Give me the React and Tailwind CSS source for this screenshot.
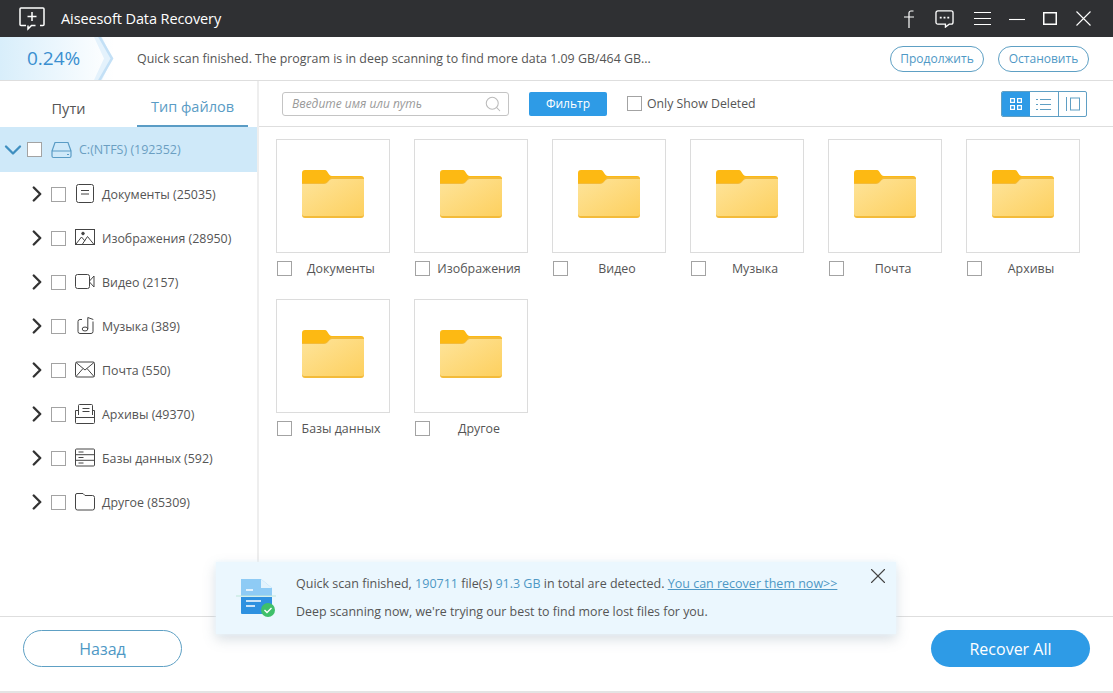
import React from "react";
import { ChevronRight, ChevronDown, Search, X } from "lucide-react";

const font = "font-['Open_Sans','Noto_Sans',sans-serif]";

const Check = ({ className = "" }) => (
  <span className={`block w-[15px] h-[15px] border border-[#a3a3a3] bg-white shrink-0 ${className}`} />
);

const icons = {
  doc: (
    <>
      <rect x="1.5" y="0.5" width="17" height="18" rx="2" />
      <path d="M6 6.500h8M6 10h8" />
    </>
  ),
  image: (
    <>
      <rect x="0.5" y="1.500" width="19" height="15" />
      <circle cx="8" cy="5.500" r="1.300" fill="#444" />
      <path d="M1 16l5.500-7 3.500 4M7.500 16l5-7.500 6.500 8" />
    </>
  ),
  video: (
    <>
      <rect x="0.5" y="2.500" width="14" height="14" rx="2" />
      <path d="M14.500 9l4.500-5v11l-4.500-5" />
    </>
  ),
  music: (
    <>
      <path d="M7 3.500H5a2 2 0 0 0-2 2v10a2 2 0 0 0 2 2h11a2 2 0 0 0 2-2v-10" />
      <ellipse cx="10" cy="13" rx="2.800" ry="2" />
      <path d="M12.800 13V1.500l5.500 2" />
    </>
  ),
  mail: (
    <>
      <rect x="0.5" y="2" width="19" height="15" rx="1.500" />
      <path d="M1 2.500l9 7.500 9-7.500M1 16.500l7-8M19 16.500l-7-8" />
    </>
  ),
  archive: (
    <>
      <path d="M3.500 11V1.500a1 1 0 0 1 1-1h12a1 1 0 0 1 1 1V11" />
      <path d="M7.500 4.500h7M7.500 7.500h7" />
      <path d="M3.500 6.500H.5v12a1 1 0 0 0 1 1h17a1 1 0 0 0 1-1v-12h-2M.5 13.500h19" />
    </>
  ),
  db: (
    <>
      <rect x="0.5" y="1" width="19" height="17" rx="1" />
      <path d="M.5 6.700h19M.5 12.300h19M3.500 4h5M3.500 9.500h5M3.500 15h5" />
    </>
  ),
  other: <path d="M.5 16V3a1.500 1.500 0 0 1 1.500-1.500h6l2 2h7.500A2 2 0 0 1 19.500 5.500V16a2 2 0 0 1-2 2h-15a2 2 0 0 1-2-2z" />,
};

const tree = [
  ["doc", "Документы (25035)"],
  ["image", "Изображения (28950)"],
  ["video", "Видео (2157)"],
  ["music", "Музыка (389)"],
  ["mail", "Почта (550)"],
  ["archive", "Архивы (49370)"],
  ["db", "Базы данных (592)"],
  ["other", "Другое (85309)"],
];

const folders = ["Документы", "Изображения", "Видео", "Музыка", "Почта", "Архивы", "Базы данных", "Другое"];

const Folder = () => (
  <svg width="62" height="48" viewBox="0 0 62 48">
    <defs>
      <linearGradient id="folderBody" x1="0" y1="0" x2="1" y2="1">
        <stop offset="0" stopColor="#fee49a" />
        <stop offset="1" stopColor="#fdd05f" />
      </linearGradient>
    </defs>
    <path d="M0 3a3 3 0 0 1 3-3h20c3 0 3 6 7 6h29a3 3 0 0 1 3 3v10H0z" fill="#fdb913" />
    <path d="M0 13h22c4 0 5-5 8-6h29a3 3 0 0 1 3 3v35a3 3 0 0 1-3 3H3a3 3 0 0 1-3-3z" fill="#f3bb3a" />
    <path d="M0 14h22c4 0 5-5 8-5h32v35a2 2 0 0 1-2 2H2a2 2 0 0 1-2-2z" fill="url(#folderBody)" />
  </svg>
);

const FolderCard = ({ name }) => (
  <div className="w-[114px]">
    <div className="h-[114px] border border-[#dcdcdc] bg-white flex items-center justify-center pb-[5px]">
      <Folder />
    </div>
    <div className="flex items-center h-[15px] mt-[8px]">
      <Check className="ml-[1px]" />
      <span className="flex-1 text-center text-[12.400px] text-[#555] pt-[2px] whitespace-nowrap">{name}</span>
    </div>
  </div>
);

export default function App() {
  return (
    <div className={`${font} w-[1113px] h-[693px] bg-white flex flex-col overflow-hidden relative`}>
      {/* title bar */}
      <div className="h-[37px] shrink-0 bg-[#2f3033] flex items-center text-white">
        <svg className="ml-[19px]" width="26" height="24" viewBox="0 0 26 24" fill="none" stroke="#fff" strokeWidth="1.500">
          <path d="M7 18.500H2a1 1 0 0 1-1-1V2a1 1 0 0 1 1-1h22a1 1 0 0 1 1 1v15.500a1 1 0 0 1-1 1h-3M9 18.500l0 3.500 3.500-3.500h4" />
          <path d="M13 5v9M8.500 9.500h9" />
        </svg>
        <span className="ml-[16px] text-[14.500px] tracking-[-0.1px]">Aiseesoft Data Recovery</span>
        <div className="ml-auto flex items-center">
          <svg width="12" height="18" viewBox="0 0 12 18" fill="none" stroke="#fff" strokeWidth="1.200">
            <path d="M10.500 1H8a2 2 0 0 0-2 2v15M1 7h10" />
          </svg>
          <svg className="ml-[20px]" width="19" height="18" viewBox="0 0 20 19" fill="none" stroke="#fff" strokeWidth="1.400">
            <path d="M3 1h14a2 2 0 0 1 2 2v10a2 2 0 0 1-2 2h-2l-4 3v-3H3a2 2 0 0 1-2-2V3a2 2 0 0 1 2-2z" />
            <path d="M5 8h2M9 8h2M13 8h2" strokeWidth="1.800" />
          </svg>
          <svg className="ml-[20px]" width="17" height="15" viewBox="0 0 17 15" fill="none" stroke="#fff" strokeWidth="1.100">
            <path d="M0 1.500h17M0 7.500h17M0 13.500h17" />
          </svg>
          <svg className="ml-[18px]" width="16" height="4" viewBox="0 0 16 4" fill="none" stroke="#fff" strokeWidth="1.100">
            <path d="M0 2.500h16" />
          </svg>
          <svg className="ml-[18px]" width="14" height="13" viewBox="0 0 14 13" fill="none" stroke="#fff" strokeWidth="1.500">
            <rect x="0.750" y="0.750" width="12.500" height="11.500" />
          </svg>
          <svg className="ml-[19px] mr-[22px]" width="15" height="15" viewBox="0 0 15 15" fill="none" stroke="#fff" strokeWidth="1.100">
            <path d="M.500 .500l14 14M14.500 .500l-14 14" />
          </svg>
        </div>
      </div>

      {/* progress row */}
      <div className="h-[44px] shrink-0 border-b border-[#dedede] flex items-center relative">
        <div className="w-[114px] h-full shrink-0 bg-gradient-to-r from-[#d8eefb] to-white flex items-center relative overflow-hidden">
          <span className="ml-[27px] text-[19px] text-[#3a8fd0]">0.24%</span>
          <svg className="absolute right-0 top-0" width="20" height="43" viewBox="0 0 20 43">
            <path d="M0 0h8l10 21.500L8 43H0l10-21.500z" fill="#e4f2fc" />
            <path d="M5 -1l13 22.500L5 44" fill="none" stroke="#c3e0f6" strokeWidth="2.500" />
          </svg>
        </div>
        <span className="ml-[23px] text-[12.400px] text-[#555] pt-[2px] whitespace-nowrap">
          Quick scan finished. The program is in deep scanning to find more data 1.09 GB/464 GB...
        </span>
        <div className="ml-auto flex gap-[14px] mr-[24px]">
          <button className="w-[94px] h-[26px] rounded-full border border-[#5ea0c4] text-[12px] text-[#4e98c5]">Продолжить</button>
          <button className="w-[91px] h-[26px] rounded-full border border-[#5ea0c4] text-[12px] text-[#4e98c5]">Остановить</button>
        </div>
      </div>

      {/* middle */}
      <div className="flex-1 flex min-h-0">
        <div className="w-[259px] shrink-0 border-r-2 border-[#eeeeee]">
          <div className="h-[46px] flex">
            <div className="w-[137px] flex items-center justify-center pt-[9px] text-[14.500px] text-[#555]">Пути</div>
            <div className="w-[111px] flex items-center justify-center pt-[7px] text-[14.500px] text-[#5a9cc5] border-b-2 border-[#5a9cc5] whitespace-nowrap">
              Тип файлов
            </div>
          </div>
          <div className="h-[45px] bg-[#cfe9f9] flex items-center">
            <ChevronDown className="-ml-px shrink-0 text-[#3f8fc0]" size={28} strokeWidth={2} />
            <Check className="bg-transparent" />
            <svg className="ml-[9px]" width="21" height="18" viewBox="0 0 21 18" fill="none" stroke="#5a9cc5" strokeWidth="1.200">
              <path d="M1 10L4 1.500h13L20 10M1 10h19v5a1.500 1.500 0 0 1-1.500 1.500h-16A1.500 1.500 0 0 1 1 15zM16 13.500h2" />
            </svg>
            <span className="ml-[7px] pt-[2px] text-[12.500px] text-[#6b9fc2] whitespace-nowrap">C:(NTFS) (192352)</span>
          </div>
          {tree.map(([icon, label]) => (
            <div key={label} className="h-[44px] flex items-center">
              <ChevronRight className="ml-[24px] -mt-[1px] shrink-0 text-[#333]" size={26} strokeWidth={2.200} />
              <Check className="ml-[1px]" />
              <svg className="ml-[9px] shrink-0" width="20" height="20" viewBox="0 0 20 20" fill="none" stroke="#444" strokeWidth="1">
                {icons[icon]}
              </svg>
              <span className="ml-[7px] pt-[2px] text-[12.400px] text-[#555] whitespace-nowrap">{label}</span>
            </div>
          ))}
        </div>

        <div className="flex-1 min-w-0">
          <div className="h-[46px] border-b border-[#dedede] flex items-center">
            <div className="ml-[23px] w-[227px] h-[24px] border border-[#c4c4c4] rounded-[3px] flex items-center">
              <span className="ml-[9px] pt-[1px] text-[12px] italic text-[#9a9a9a] whitespace-nowrap">Введите имя или путь</span>
              <Search className="ml-auto mr-[6px] text-[#bbb]" size={18} strokeWidth={1.400} />
            </div>
            <button className="ml-[20px] w-[78px] h-[24px] rounded-[2px] bg-[#2e9be6] text-white text-[12px]">Фильтр</button>
            <Check className="ml-[20px]" />
            <span className="ml-[5px] pt-[2px] text-[12.300px] text-[#555] whitespace-nowrap">Only Show Deleted</span>
            <div className="ml-auto mr-[26px] flex h-[26px] border border-[#5f9fc4] rounded-[2px] overflow-hidden">
              <div className="w-[28px] bg-[#2e9be6] flex items-center justify-center">
                <svg width="12" height="12" viewBox="0 0 12 12" fill="none" stroke="#fff" strokeWidth="1.200">
                  <rect x="0.600" y="0.600" width="3.800" height="3.800" />
                  <rect x="7.600" y="0.600" width="3.800" height="3.800" />
                  <rect x="0.600" y="7.600" width="3.800" height="3.800" />
                  <rect x="7.600" y="7.600" width="3.800" height="3.800" />
                </svg>
              </div>
              <div className="w-[29px] border-r border-[#5f9fc4] flex items-center justify-center">
                <svg width="16" height="12" viewBox="0 0 16 12" fill="none" stroke="#5f9fc4" strokeWidth="1">
                  <path d="M4 1.500h11M4 6.500h11M4 11.500h11M0 1.500h2M0 6.500h2M0 11.500h2" />
                </svg>
              </div>
              <div className="w-[27px] flex items-center justify-center">
                <svg width="14" height="14" viewBox="0 0 14 14" fill="none" stroke="#5f9fc4" strokeWidth="1">
                  <path d="M.500 0v14" />
                  <rect x="4.500" y="1" width="9" height="12" />
                </svg>
              </div>
            </div>
          </div>
          <div className="grid grid-cols-[repeat(6,114px)] gap-x-[24px] gap-y-[23px] pl-[17px] pt-[12px]">
            {folders.map((f) => (
              <FolderCard key={f} name={f} />
            ))}
          </div>
        </div>
      </div>

      {/* bottom */}
      <div className="h-[77px] shrink-0 border-t border-[#dedede] border-b-2 border-b-[#e4e4e4] flex items-start justify-between pt-[13px]">
        <button className="ml-[23px] w-[159px] h-[37px] rounded-full border border-[#5ea0c4] text-[16px] text-[#4e98c5]">Назад</button>
        <button className="mr-[23px] w-[159px] h-[37px] rounded-full bg-[#2e9be6] text-[16px] text-white">Recover All</button>
      </div>

      {/* toast */}
      <div className="absolute left-[216px] top-[562px] w-[680px] h-[72px] bg-[#ebf7fe] shadow-[0_0_4px_#ebf7fe,0_5px_12px_rgba(90,120,140,0.25)] flex items-center">
        <svg className="ml-[20px] shrink-0" width="42" height="40" viewBox="0 0 42 40">
          <path d="M5 1h20l11 9v8H5z" fill="#8ecbf5" />
          <path d="M25 1l11 9H25z" fill="#e3f3fd" />
          <path d="M10 12h7" stroke="#fff" strokeWidth="1.500" />
          <path d="M0 18h40" stroke="#bde6d9" strokeWidth="1" />
          <path d="M5 19h31v17H6a1 1 0 0 1-1-1z" fill="#2e91e0" />
          <path d="M10 23h15M10 28h9" stroke="#fff" strokeWidth="1.500" />
          <circle cx="32" cy="32" r="7" fill="#3fc06a" />
          <path d="M28.500 32l2.500 2.500 4.500-4.500" stroke="#fff" strokeWidth="1.400" fill="none" />
        </svg>
        <div className="ml-[18px] text-[12.500px] text-[#555] whitespace-nowrap">
          <div className="h-[28px] leading-[28px]">
            Quick scan finished, <span className="text-[#4e98c5]">190711</span> file(s){" "}
            <span className="text-[#4e98c5]">91.3 GB</span> in total are detected.{" "}
            <span className="text-[#4e98c5] underline">You can recover them now&gt;&gt;</span>
          </div>
          <div className="h-[28px] leading-[28px] text-[12.400px]">Deep scanning now, we're trying our best to find more lost files for you.</div>
        </div>
        <X className="absolute right-[5px] top-[1px] text-[#444]" size={26} strokeWidth={1} />
      </div>
    </div>
  );
}
